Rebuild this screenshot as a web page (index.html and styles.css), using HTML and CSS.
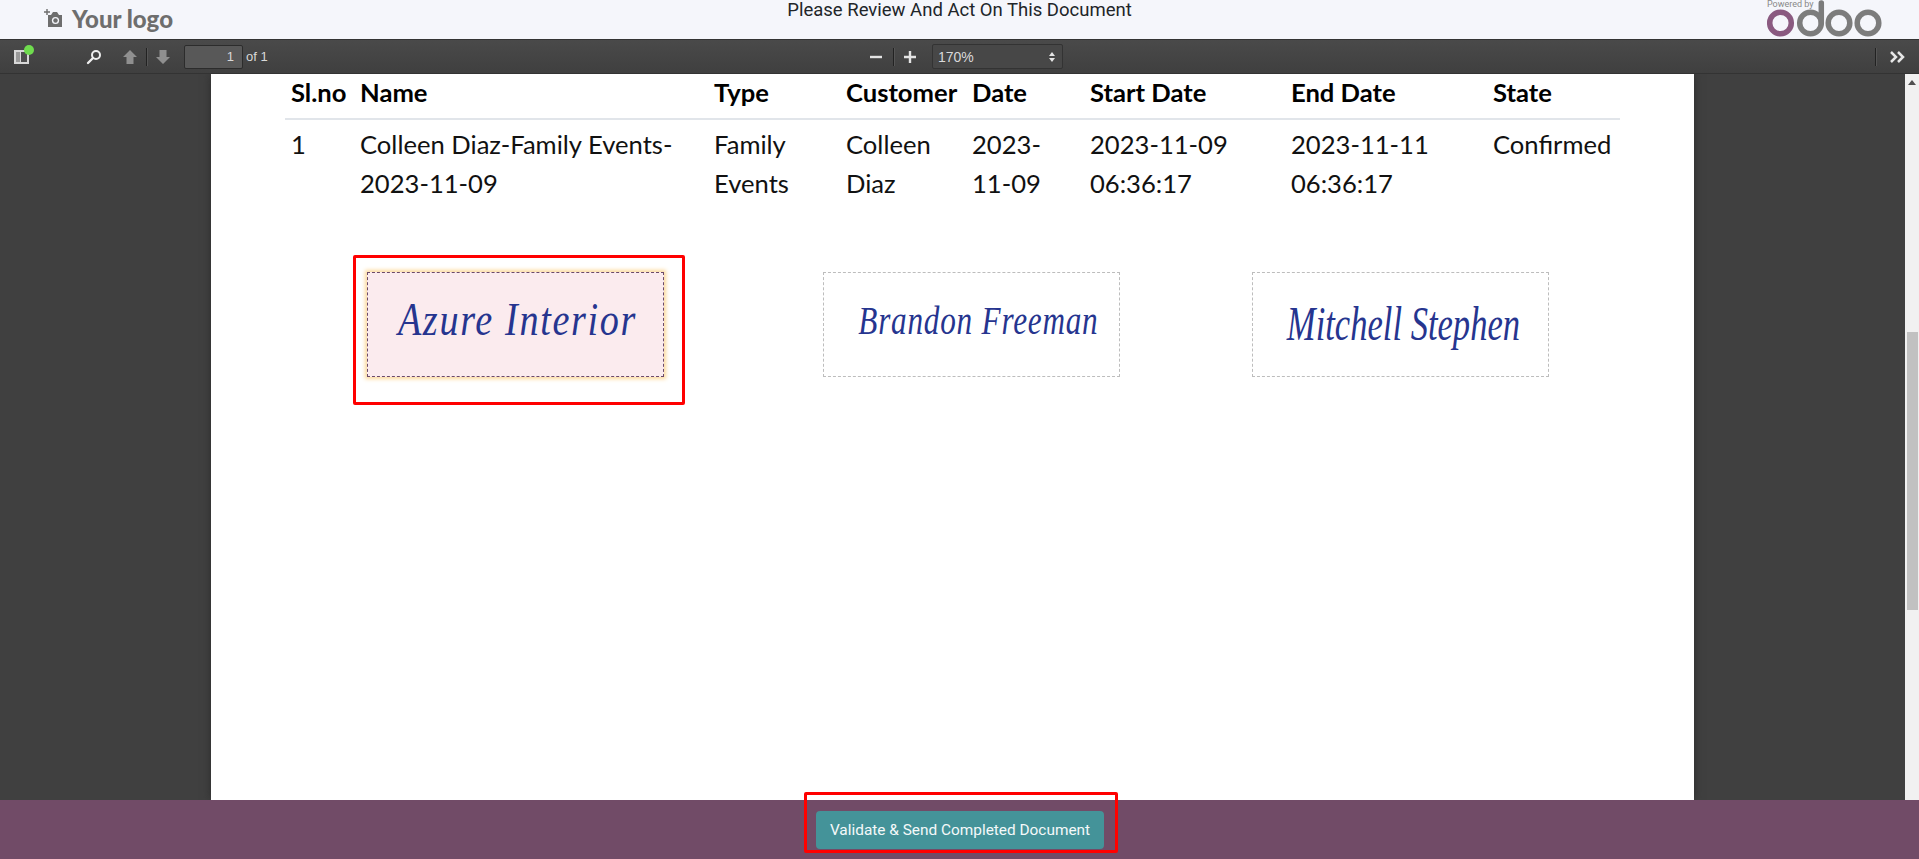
FILE: index.html
```html
<!DOCTYPE html>
<html lang="en">
<head>
<meta charset="utf-8">
<title>Please Review And Act On This Document</title>
<link rel="stylesheet" href="styles.css">
</head>
<body>
<header class="top">
  <div class="logo">
    <svg class="logo-cam" width="20" height="20" viewBox="0 0 20 20"><path d="M3 1v6M0 4h6" stroke="#6e6e6e" stroke-width="1.4" fill="none"/><path d="M4 7h3l2-3h4l2 3h3v12H4z" fill="#6e6e6e"/><circle cx="11.500" cy="12.500" r="3.600" fill="#f5f6fb"/><circle cx="11.500" cy="12.500" r="2.200" fill="#6e6e6e"/></svg>
    <span class="logo-text">Your logo</span>
  </div>
  <div class="title">Please Review And Act On This Document</div>
  <div class="odoo">
    <svg class="odoo-mark" width="116" height="39" viewBox="0 0 116 39"><g fill="none" stroke-width="5.500"><circle cx="13.500" cy="23" r="10.800" stroke="#8a5a80"/><circle cx="43.500" cy="23" r="10.800" stroke="#7c7c7c"/><path d="M54.300 23V3" stroke="#7c7c7c" stroke-linecap="round"/><circle cx="72" cy="23" r="10.800" stroke="#7c7c7c"/><circle cx="101" cy="23" r="10.800" stroke="#7c7c7c"/></g></svg>
    <span class="powered">Powered by</span>
  </div>
</header>

<nav class="toolbar">
  <div class="tb-left">
    <span class="sidebar-btn">
      <svg width="15" height="14" viewBox="0 0 15 14"><path d="M0 0h15v14H0z" fill="#d8d8d8"/><path d="M2 2h4v10H2z" fill="#9a9a9a"/><path d="M7 2h6v10H7z" fill="#4f4f4f"/></svg>
      <span class="dot"></span>
    </span>
    <svg class="search" width="16" height="16" viewBox="0 0 16 16"><circle cx="10" cy="6" r="4" fill="none" stroke="#eee" stroke-width="2"/><path d="M7 9l-5 5" stroke="#eee" stroke-width="2.400" stroke-linecap="round"/></svg>
    <svg class="arrow" width="16" height="16" viewBox="0 0 16 16"><path d="M8 1l7 7h-3.500v7h-7V8H1z" fill="#8f8f8f"/></svg>
    <span class="sep"></span>
    <svg class="arrow" width="16" height="16" viewBox="0 0 16 16"><path d="M8 15l7-7h-3.500V1h-7v7H1z" fill="#8f8f8f"/></svg>
    <span class="page-input">1</span>
    <span class="of">of 1</span>
  </div>
  <div class="tb-mid">
    <svg class="zoom-ic" width="12" height="12" viewBox="0 0 12 12"><path d="M0 4.800h12v2.400H0z" fill="#e4e4e4"/></svg>
    <span class="sep"></span>
    <svg class="zoom-ic" width="12" height="12" viewBox="0 0 12 12"><path d="M0 4.800h12v2.400H0zM4.800 0h2.400v12H4.800z" fill="#e4e4e4"/></svg>
    <span class="zoom-select">170%
      <svg width="6" height="10" viewBox="0 0 6 10"><path d="M3 0l3 4H0zM3 10l3-4H0z" fill="#e4e4e4"/></svg>
    </span>
  </div>
  <div class="tb-right">
    <span class="sep"></span>
    <svg class="more" width="16" height="12" viewBox="0 0 16 12"><path d="M1 1l5 5-5 5M8 1l5 5-5 5" fill="none" stroke="#e6e6e6" stroke-width="2.500"/></svg>
  </div>
</nav>

<main class="viewer">
  <div class="canvas">
    <article class="page">
      <table class="doc">
        <colgroup>
          <col class="c1"><col class="c2"><col class="c3"><col class="c4"><col class="c5"><col class="c6"><col class="c7"><col class="c8">
        </colgroup>
        <thead>
          <tr><th>Sl.no</th><th>Name</th><th>Type</th><th>Customer</th><th>Date</th><th>Start Date</th><th>End Date</th><th>State</th></tr>
        </thead>
        <tbody>
          <tr>
            <td>1</td>
            <td>Colleen Diaz-Family Events-<br>2023-11-09</td>
            <td>Family<br>Events</td>
            <td>Colleen<br>Diaz</td>
            <td>2023-<br>11-09</td>
            <td>2023-11-09<br>06:36:17</td>
            <td>2023-11-11<br>06:36:17</td>
            <td>Confirmed</td>
          </tr>
        </tbody>
      </table>
      <div class="signs">
        <div class="sign sign-active"><span class="script s1">Azure Interior</span></div>
        <div class="sign"><span class="script s2">Brandon Freeman</span></div>
        <div class="sign sign-last"><span class="script s3">Mitchell Stephen</span></div>
      </div>
      <span class="mark mark-sign"></span>
    </article>
  </div>
  <div class="scrollbar">
    <span class="sb-up"></span>
    <span class="sb-thumb"></span>
  </div>
</main>

<footer class="bottom">
  <button class="validate" type="button">Validate &amp; Send Completed Document</button>
  <span class="mark mark-btn"></span>
</footer>
</body>
</html>
```
FILE: styles.css
```css
* { box-sizing: border-box; }
html, body { margin: 0; height: 100%; }
body {
  display: flex;
  flex-direction: column;
  height: 859px;
  overflow: hidden;
  font-family: "Roboto", sans-serif;
  background: #f5f6fb;
}

/* top bar */
.top {
  flex: 0 0 39px;
  display: grid;
  grid-template-columns: 1fr auto 1fr;
  background: #f5f6fb;
  overflow: hidden;
}
.logo { display: flex; align-items: center; gap: 8px; padding: 0 0 0 44px; height: 36px; }
.logo-text { font: 900 24px "Lato", sans-serif; color: #6e6e6e; }
.title { font-size: 18.500px; line-height: 21px; color: #212529; }
.odoo { justify-self: end; position: relative; width: 152px; }
.powered { position: absolute; left: 0; top: 0; font-size: 9px; line-height: 9px; color: #888; background: #f5f6fb; padding-right: 1px; }
.odoo-mark { position: absolute; left: 0; top: 0; }

/* pdf toolbar */
.toolbar {
  flex: 0 0 35px;
  display: grid;
  grid-template-columns: 1fr auto 1fr;
  align-items: center;
  background: linear-gradient(#4a4a4a, #3f3f3f);
  box-shadow: inset 0 -1px 0 #333, inset 0 1px 0 #333;
  color: #d9d9d9;
  font: 13px "Liberation Sans", sans-serif;
}
.tb-left, .tb-mid, .tb-right { display: flex; align-items: center; }
.tb-left { padding-left: 14px; }
.sidebar-btn { position: relative; display: block; width: 15px; height: 14px; }
.sidebar-btn svg { display: block; }
.dot { position: absolute; left: 10px; top: -5px; width: 10px; height: 10px; border-radius: 50%; background: #6fdc4e; }
.search { margin-left: 57px; }
.search + .arrow { margin-left: 20px; }
.sep { display: block; width: 1px; height: 18px; background: #222; box-shadow: 1px 0 0 #555; }
.tb-left .sep { margin: 0 8px; }
.page-input {
  margin-left: 13px;
  width: 59px;
  height: 24px;
  padding-right: 8px;
  line-height: 22px;
  text-align: right;
  background: #585858;
  border: 1px solid #2c2c2c;
  border-radius: 2px;
}
.of { margin-left: 3px; }
.tb-mid { padding-left: 14px; }
.tb-mid .sep { margin: 0 10px 0 11px; }
.zoom-select {
  margin-left: 16px;
  width: 131px;
  height: 25px;
  display: flex;
  align-items: center;
  justify-content: space-between;
  padding: 0 7px 0 5px;
  font-size: 14px;
  background: #474747;
  border: 1px solid #333;
  border-radius: 2px;
}
.tb-right { justify-content: flex-end; padding-right: 13px; }
.tb-right .sep { margin-right: 14px; }

/* document */
.viewer { flex: 1 1 auto; display: flex; min-height: 0; background: #404040; }
.canvas { flex: 1 1 auto; display: flex; justify-content: center; overflow: hidden; min-width: 0; }
.page {
  position: relative;
  width: 1483px;
  background: #fff;
  box-shadow: 0 0 9px #2c2c2c;
  padding-left: 74px;
}
.doc {
  width: 1335px;
  table-layout: fixed;
  border-collapse: collapse;
  font: 400 25.600px/39px "Lato", sans-serif;
  color: #111;
}
.c1 { width: 69px; } .c2 { width: 354px; } .c3 { width: 132px; } .c4 { width: 126px; }
.c5 { width: 118px; } .c6 { width: 201px; } .c7 { width: 202px; } .c8 { width: 133px; }
.doc th { padding: 0 0 8px 6px; line-height: 36px; text-align: left; font-weight: 700; color: #000; border-bottom: 2px solid #e1e5ea; }
.doc td { padding: 5px 0 0 6px; vertical-align: top; }

.signs { display: flex; gap: 159px; margin: 69px 0 0 82px; }
.sign {
  flex: 0 0 297px;
  height: 105px;
  border: 1px dashed #bdbdbd;
  overflow: hidden;
}
.sign-last { margin-left: -27px; }
.sign-active {
  background: #fbebee;
  border-color: #6b4a6a;
  box-shadow: 0 0 4px 2px #fcd99c;
}
.script {
  display: block;
  font-family: "Liberation Serif", serif;
  font-style: italic;
  color: #26358f;
  white-space: nowrap;
  transform-origin: left top;
}
.s1 { font-size: 46px; letter-spacing: 2px; padding: 20px 0 0 36px; transform: scaleX(.83); }
.s2 { font-size: 40px; letter-spacing: 1px; padding: 24px 0 0 44px; transform: scaleX(.78); }
.s3 { font-size: 48px; padding: 23px 0 0 47px; transform: scaleX(.72); }

/* scrollbar */
.scrollbar { flex: 0 0 14px; position: relative; background: #f1f1f1; }
.sb-up { position: absolute; left: 3px; top: 6px; border: 4px solid transparent; border-top: 0; border-bottom: 5px solid #505050; }
.sb-thumb { position: absolute; left: 2px; right: 1px; top: 258px; height: 278px; background: #c1c1c1; }

/* footer */
.bottom {
  flex: 0 0 59px;
  position: relative;
  display: flex;
  justify-content: center;
  align-items: flex-start;
  padding: 11px 0 0 1px;
  background: #714b67;
}
.validate {
  width: 288px;
  height: 38px;
  border: 0;
  border-radius: 4px;
  background: #449399;
  color: #f4f9f9;
  font: 400 15.400px "Roboto", sans-serif;
}

/* annotation rectangles */
.mark { position: absolute; border: 3px solid #f00; border-radius: 2px; pointer-events: none; }
.mark-sign { left: 142px; top: 181px; width: 332px; height: 150px; }
.mark-btn { left: 804px; top: -8px; width: 314px; height: 61px; }
```
